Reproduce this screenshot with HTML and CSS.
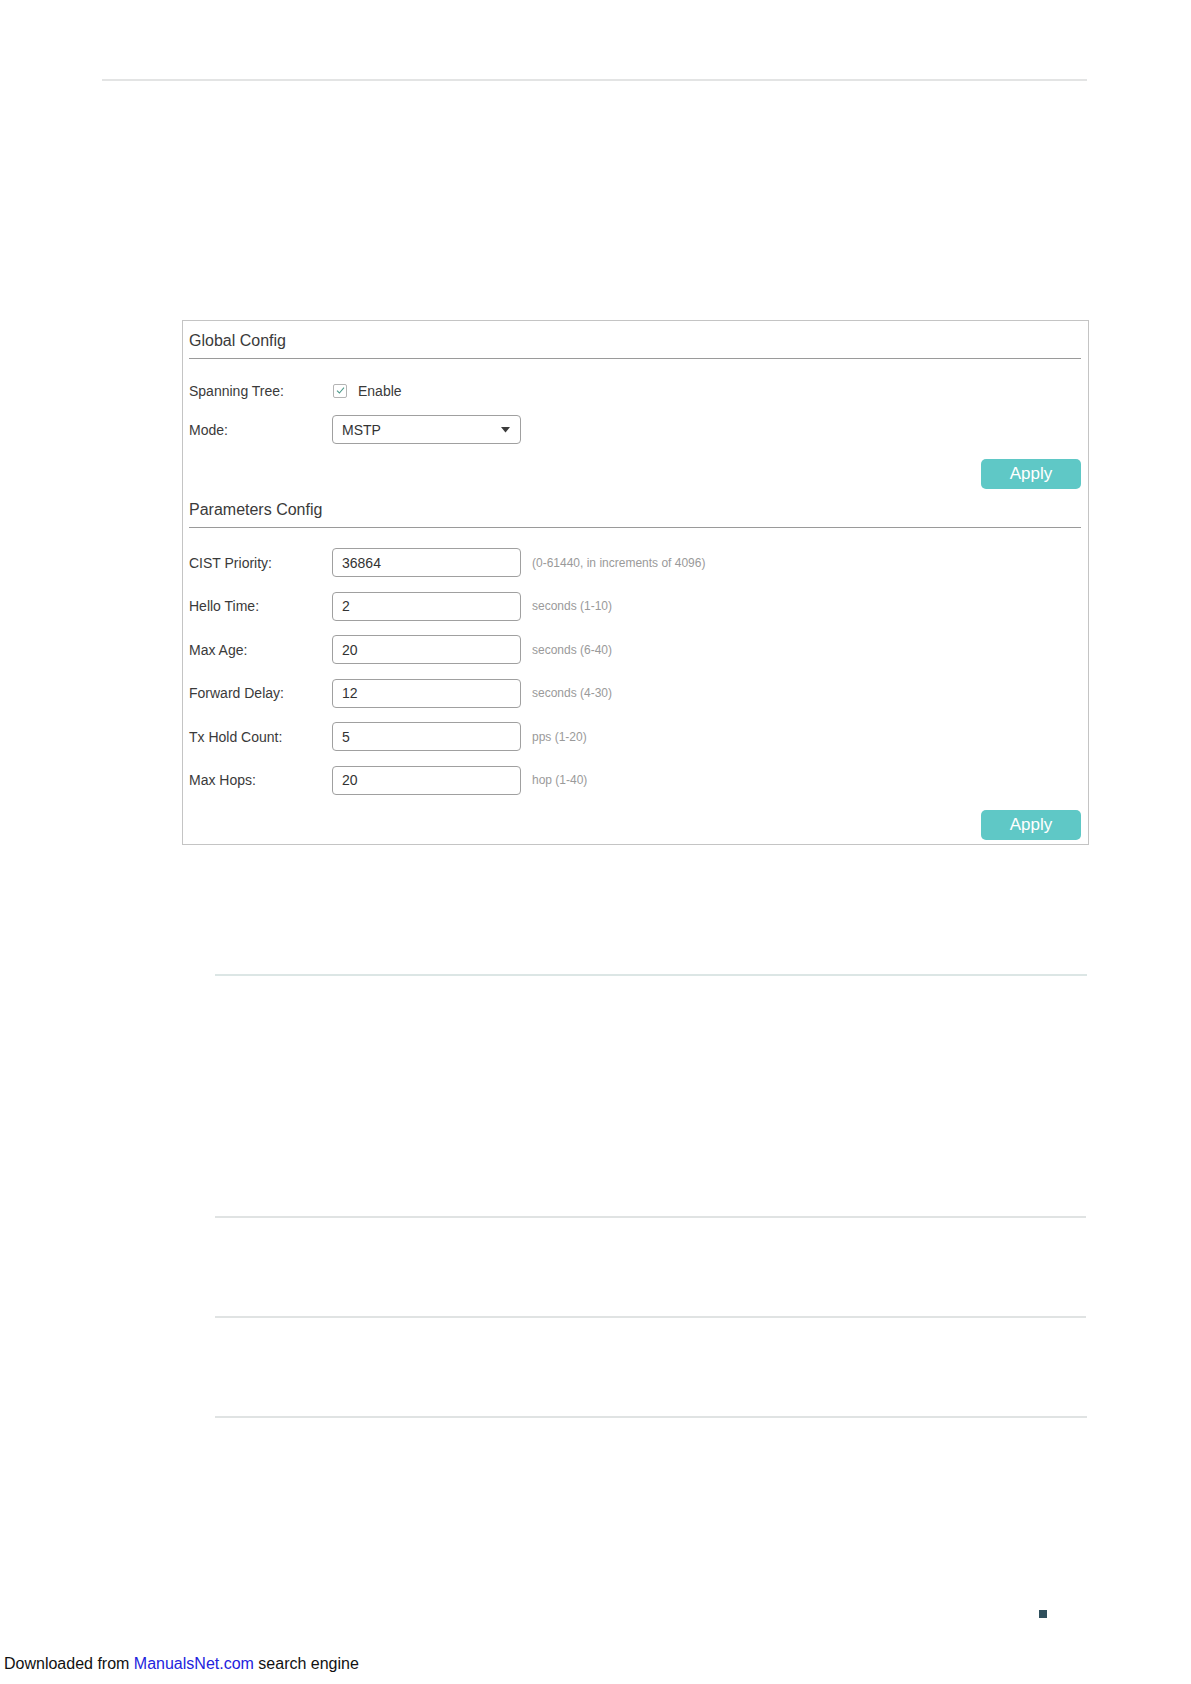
FILE: index.html
```html
<!DOCTYPE html>
<html lang="en">
<head>
<meta charset="utf-8">
<title>Spanning Tree Global Config</title>
<link rel="stylesheet" href="styles.css">
</head>
<body>
<div class="page">
  <div class="top-rule"></div>

  <section class="panel">
    <div class="section-title">Global Config</div>
    <div class="rows rows-global">
      <div class="row">
        <span class="label">Spanning Tree:</span>
        <label class="check">
          <span class="check-box">
            <svg width="11" height="11" viewBox="0 0 11 11"><path d="M2 5.6 L4.4 8 L9 2.6" fill="none" stroke="#4f9b8c" stroke-width="1.1"/></svg>
          </span>
          <span class="check-text">Enable</span>
        </label>
      </div>
      <div class="row">
        <span class="label">Mode:</span>
        <div class="select">
          <span class="select-value">MSTP</span>
          <svg class="select-arrow" width="9" height="6" viewBox="0 0 9 6"><polygon points="0,0 9,0 4.5,5.5" fill="#3c3c3c"/></svg>
        </div>
      </div>
    </div>
    <div class="actions actions-global"><button class="apply">Apply</button></div>

    <div class="section-title section-title-params">Parameters Config</div>
    <div class="rows rows-params">
      <div class="row"><span class="label">CIST Priority:</span><input class="field" type="text" value="36864"><span class="hint">(0-61440, in increments of 4096)</span></div>
      <div class="row"><span class="label">Hello Time:</span><input class="field" type="text" value="2"><span class="hint">seconds (1-10)</span></div>
      <div class="row"><span class="label">Max Age:</span><input class="field" type="text" value="20"><span class="hint">seconds (6-40)</span></div>
      <div class="row"><span class="label">Forward Delay:</span><input class="field" type="text" value="12"><span class="hint">seconds (4-30)</span></div>
      <div class="row"><span class="label">Tx Hold Count:</span><input class="field" type="text" value="5"><span class="hint">pps (1-20)</span></div>
      <div class="row"><span class="label">Max Hops:</span><input class="field" type="text" value="20"><span class="hint">hop (1-40)</span></div>
    </div>
    <div class="actions actions-params"><button class="apply">Apply</button></div>
  </section>

  <div class="rule rule-a"></div>
  <div class="rule rule-b"></div>
  <div class="rule rule-c"></div>
  <div class="rule rule-d"></div>

  <div class="marker"></div>

  <p class="footer">Downloaded from <a class="footer-link" href="#">ManualsNet.com</a> search engine</p>
</div>
</body>
</html>
```

FILE: styles.css
```css
html, body {
  margin: 0;
  padding: 0;
  background: #ffffff;
}

body {
  font-family: "Liberation Sans", Arial, sans-serif;
  color: #333333;
}

.page {
  width: 1191px;
  overflow: hidden;
}

.top-rule {
  margin: 79px 0 0 102px;
  width: 985px;
  height: 2px;
  background: #e3e4e4;
}

.panel {
  box-sizing: border-box;
  margin: 239px 0 0 182px;
  width: 907px;
  border: 1px solid #c4c4c4;
  padding: 10px 7px 4px 6px;
}

.section-title {
  font-size: 16px;
  line-height: 20px;
  color: #3a3a3a;
  padding-bottom: 7px;
  border-bottom: 1px solid #9a9a9a;
}

.section-title-params {
  margin-top: 11px;
}

.rows {
  display: flex;
  flex-direction: column;
}

.rows-global {
  margin-top: 17px;
  gap: 10px;
}

.rows-params {
  margin-top: 20px;
  gap: 14.6px;
}

.row {
  display: flex;
  align-items: center;
  height: 29px;
}

.label {
  flex: 0 0 143px;
  font-size: 14px;
  color: #3a3a3a;
}

.check {
  display: flex;
  align-items: center;
  gap: 11px;
}

.check-box {
  box-sizing: border-box;
  width: 14px;
  height: 14px;
  border: 1px solid #b4b4b4;
  border-radius: 2px;
  display: flex;
  align-items: center;
  justify-content: center;
  margin-left: 1px;
}

.check-box svg {
  display: block;
}

.check-text {
  font-size: 14px;
  color: #3a3a3a;
}

.select {
  box-sizing: border-box;
  width: 189px;
  height: 29px;
  border: 1px solid #a0a0a0;
  border-radius: 4px;
  display: flex;
  align-items: center;
  justify-content: space-between;
  padding: 0 10px 0 9px;
}

.select-value {
  font-size: 14px;
  color: #333333;
}

.select-arrow {
  display: block;
}

.field {
  box-sizing: border-box;
  width: 189px;
  height: 29px;
  margin: 0;
  border: 1px solid #a0a0a0;
  border-radius: 4px;
  padding: 0 0 0 9px;
  font-family: "Liberation Sans", Arial, sans-serif;
  font-size: 14px;
  color: #333333;
  background: #ffffff;
  outline: none;
}

.hint {
  margin-left: 11px;
  font-size: 12px;
  color: #9a9a9a;
}

.actions {
  display: flex;
  justify-content: flex-end;
}

.actions-global {
  margin-top: 15px;
}

.actions-params {
  margin-top: 15px;
}

.apply {
  width: 100px;
  height: 30px;
  border: none;
  border-radius: 5px;
  background: #5fc8c6;
  color: #ffffff;
  font-family: "Liberation Sans", Arial, sans-serif;
  font-size: 17px;
  padding: 0;
  cursor: pointer;
}

.rule {
  height: 2px;
  margin-left: 215px;
  width: 872px;
  background: #e0e3e3;
}

.rule-a {
  margin-top: 129px;
  background: #dce6e5;
}

.rule-b {
  margin-top: 240px;
  width: 871px;
}

.rule-c {
  margin-top: 98px;
  width: 871px;
}

.rule-d {
  margin-top: 98px;
}

.marker {
  margin: 192px 0 0 1039px;
  width: 8px;
  height: 8px;
  background: #2f4f5c;
}

.footer {
  margin: 37px 0 0 0;
  padding-left: 4px;
  font-size: 16px;
  line-height: 18px;
  color: #111111;
}

.footer-link {
  color: #2323dd;
  text-decoration: none;
}
```
